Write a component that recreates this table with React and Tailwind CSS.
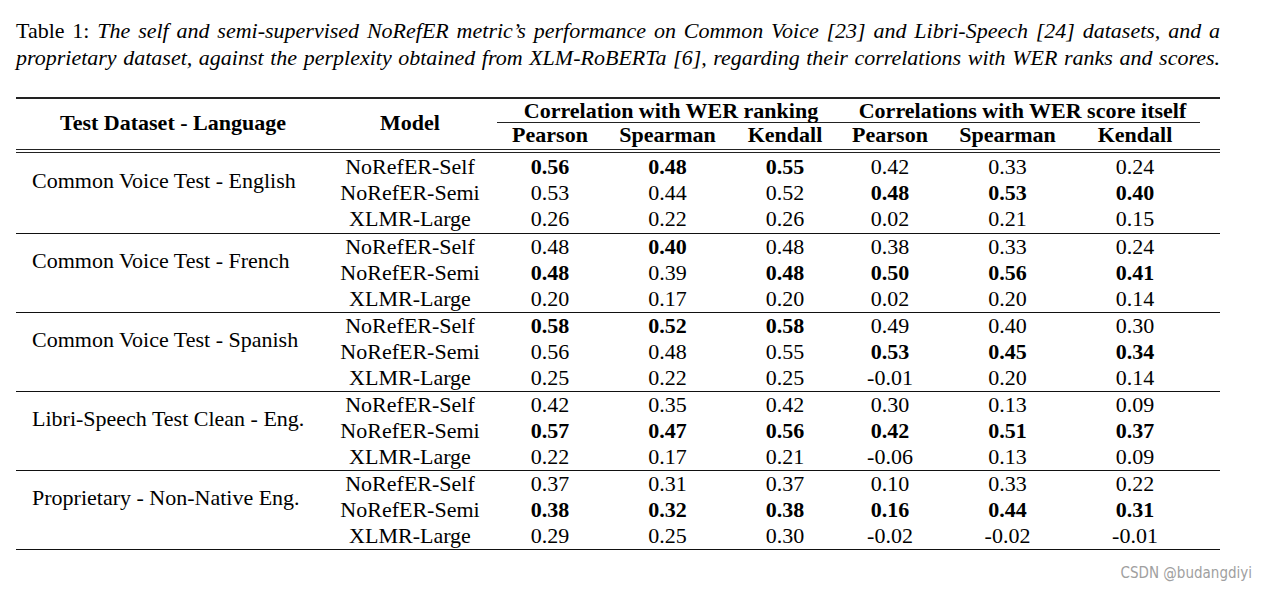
import React from 'react';

const GRID = 'grid grid-cols-[314px_160px_120px_115px_120px_90px_145px_110px_30px]';

const GROUPS = [
  {
    name: 'Common Voice Test - English',
    rows: [
      ['NoRefER-Self', '*0.56', '*0.48', '*0.55', '0.42', '0.33', '0.24'],
      ['NoRefER-Semi', '0.53', '0.44', '0.52', '*0.48', '*0.53', '*0.40'],
      ['XLMR-Large', '0.26', '0.22', '0.26', '0.02', '0.21', '0.15'],
    ],
  },
  {
    name: 'Common Voice Test - French',
    rows: [
      ['NoRefER-Self', '0.48', '*0.40', '0.48', '0.38', '0.33', '0.24'],
      ['NoRefER-Semi', '*0.48', '0.39', '*0.48', '*0.50', '*0.56', '*0.41'],
      ['XLMR-Large', '0.20', '0.17', '0.20', '0.02', '0.20', '0.14'],
    ],
  },
  {
    name: 'Common Voice Test - Spanish',
    rows: [
      ['NoRefER-Self', '*0.58', '*0.52', '*0.58', '0.49', '0.40', '0.30'],
      ['NoRefER-Semi', '0.56', '0.48', '0.55', '*0.53', '*0.45', '*0.34'],
      ['XLMR-Large', '0.25', '0.22', '0.25', '-0.01', '0.20', '0.14'],
    ],
  },
  {
    name: 'Libri-Speech Test Clean - Eng.',
    rows: [
      ['NoRefER-Self', '0.42', '0.35', '0.42', '0.30', '0.13', '0.09'],
      ['NoRefER-Semi', '*0.57', '*0.47', '*0.56', '*0.42', '*0.51', '*0.37'],
      ['XLMR-Large', '0.22', '0.17', '0.21', '-0.06', '0.13', '0.09'],
    ],
  },
  {
    name: 'Proprietary - Non-Native Eng.',
    rows: [
      ['NoRefER-Self', '0.37', '0.31', '0.37', '0.10', '0.33', '0.22'],
      ['NoRefER-Semi', '*0.38', '*0.32', '*0.38', '*0.16', '*0.44', '*0.31'],
      ['XLMR-Large', '0.29', '0.25', '0.30', '-0.02', '-0.02', '-0.01'],
    ],
  },
];

const Cell = ({ value }) => {
  const bold = value.startsWith('*');
  return (
    <div className={`text-center leading-[26px] ${bold ? 'font-bold' : ''}`}>
      {bold ? value.slice(1) : value}
    </div>
  );
};

export default function App() {
  return (
    <div className="w-[1266px] h-[593px] bg-white text-black overflow-hidden font-['Liberation_Serif','Times_New_Roman',serif] text-[22px]">
      {/* caption, justified like the LaTeX original */}
      <div className="pt-[17px] ml-[16px] w-[1204px] leading-[27px] whitespace-nowrap">
        <div className="text-justify [text-align-last:justify]">
          Table 1: <i>The self and semi-supervised NoRefER metric’s performance on Common Voice [23] and Libri-Speech [24] datasets, and a</i>
        </div>
        <div className="text-justify [text-align-last:justify]">
          <i>proprietary dataset, against the perplexity obtained from XLM-RoBERTa [6], regarding their correlations with WER ranks and scores.</i>
        </div>
      </div>

      <div className="ml-[16px] mt-[26px] w-[1204px] border-t-2 border-[#222]">
        {/* header */}
        <div className={`${GRID} grid-rows-[24px_26px] font-bold`}>
          <div className="row-span-2 flex items-center justify-center pb-[4px]">Test Dataset - Language</div>
          <div className="row-span-2 flex items-center justify-center pb-[4px]">Model</div>
          <div className="col-span-3 ml-[7px] border-b border-[#222] text-center leading-[23px]">Correlation with WER ranking</div>
          <div className="col-span-4 mr-[20px] border-b border-[#222] text-center leading-[23px]">Correlations with WER score itself</div>
          <div className="text-center leading-[24px]">Pearson</div>
          <div className="text-center leading-[24px]">Spearman</div>
          <div className="text-center leading-[24px]">Kendall</div>
          <div className="text-center leading-[24px]">Pearson</div>
          <div className="text-center leading-[24px]">Spearman</div>
          <div className="text-center leading-[24px]">Kendall</div>
        </div>
        <div className="h-[4px] border-t border-b border-[#222]" />

        {/* body */}
        {GROUPS.map((g, gi) => (
          <div key={g.name} className={`${GRID} border-b border-[#111] ${gi === 0 ? 'pt-[1px] pb-[1px]' : ''}`}>
            <div className="row-span-3 pl-[16px] pt-[14px] leading-[26px]">{g.name}</div>
            {g.rows.map((r) => (
              <React.Fragment key={r[0]}>
                <div className="text-center leading-[26px]">{r[0]}</div>
                {r.slice(1).map((v, i) => (
                  <Cell key={i} value={v} />
                ))}
                <div />
              </React.Fragment>
            ))}
          </div>
        ))}
      </div>

      <div className="mt-[14px] pr-[14px] text-right text-[15px] leading-[18px] text-[#a0a0a0] font-['DejaVu_Sans_Condensed','Roboto',sans-serif]">
        CSDN @budangdiyi
      </div>
    </div>
  );
}
